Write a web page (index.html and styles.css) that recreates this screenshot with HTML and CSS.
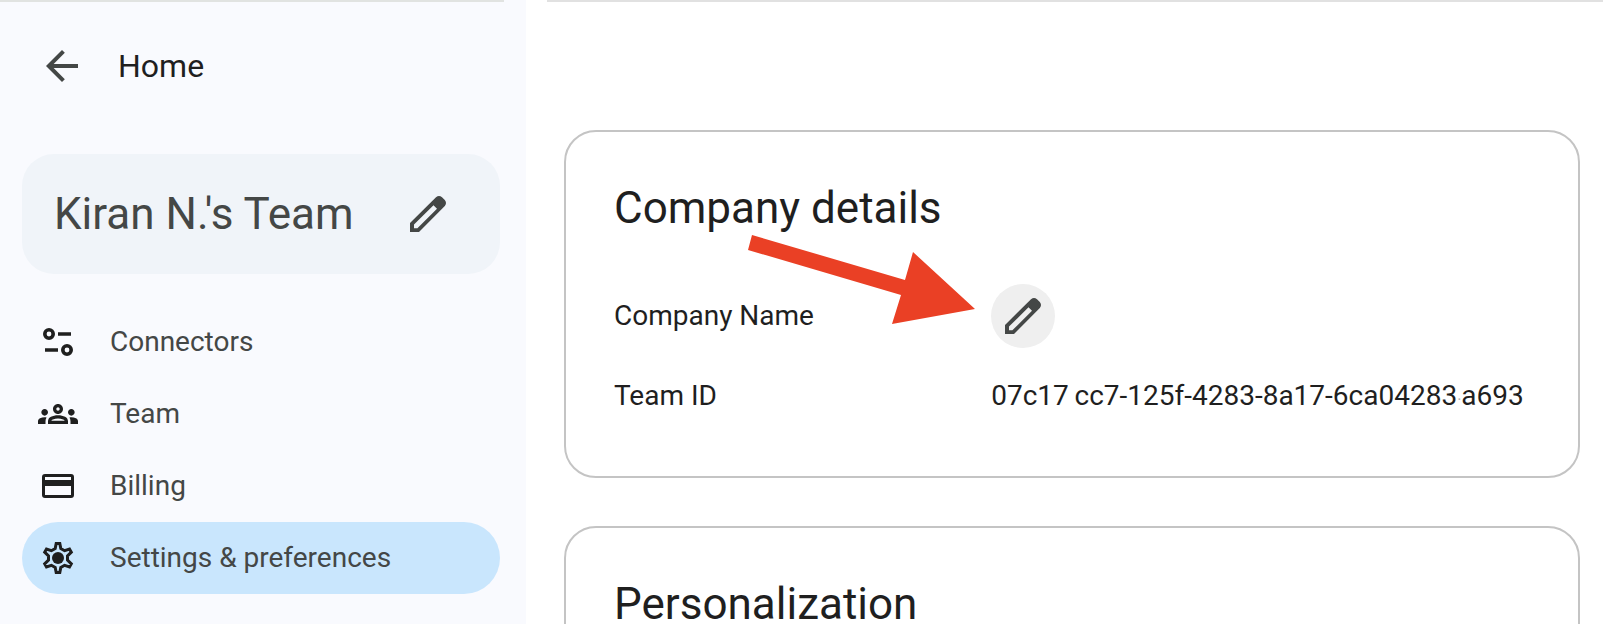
FILE: index.html
```html
<!DOCTYPE html>
<html lang="en">
  <head>
    <meta charset="UTF-8" />
    <meta name="viewport" content="width=device-width, initial-scale=1" />
    <title>Settings &amp; preferences</title>
    <link rel="stylesheet" href="styles.css">
  </head>
  <body>
    <div class="layout">
      <!-- Sidebar -->
      <aside class="sidebar">
        <a class="home-link" href="#">
          <svg class="icon-lg" viewBox="0 0 24 24" aria-hidden="true">
            <path d="M20 11H7.83l5.59-5.59L12 4l-8 8 8 8 1.41-1.41L7.83 13H20v-2z" />
          </svg>
          <span>Home</span>
        </a>

        <div class="team-card">
          <span class="team-name">Kiran N.'s Team</span>
          <button class="icon-btn" type="button" aria-label="Edit team name">
            <svg class="pencil" viewBox="0 0 36 36" aria-hidden="true">
              <path fill-rule="evenodd" d="M0 36V27L26 1.2Q29-1.2 32 1.2L34.8 4Q37.2 7 34.8 10L9 36ZM4 32.2H7.4L27 12.8 23.5 9.3 4 28.6Z" />
            </svg>
          </button>
        </div>

        <nav class="menu">
          <a class="menu-item" href="#">
            <svg class="icon" viewBox="0 0 40 40" aria-hidden="true">
              <g fill="none" stroke="currentColor">
                <circle cx="11" cy="12" r="4.2" stroke-width="3.6" />
                <circle cx="29" cy="28" r="4.2" stroke-width="3.6" />
                <path d="M20 12h13M7 28h13" stroke-width="3.4" />
              </g>
            </svg>
            <span>Connectors</span>
          </a>
          <a class="menu-item" href="#">
            <svg class="icon" viewBox="0 0 24 24" aria-hidden="true">
              <path d="M4 13c1.1 0 2-.9 2-2s-.9-2-2-2-2 .9-2 2 .9 2 2 2zm1.13 1.1C4.76 14.04 4.39 14 4 14c-.99 0-1.93.21-2.78.58C.48 14.9 0 15.62 0 16.43V18h4.5v-1.61c0-.83.23-1.61.63-2.29zM20 13c1.1 0 2-.9 2-2s-.9-2-2-2-2 .9-2 2 .9 2 2 2zm4 3.43c0-.81-.48-1.53-1.22-1.85C21.93 14.21 20.99 14 20 14c-.39 0-.76.04-1.13.1.4.68.63 1.46.63 2.29V18H24v-1.57zM16.24 13.65c-1.17-.52-2.61-.9-4.24-.9s-3.07.39-4.24.9C6.68 14.13 6 15.21 6 16.39V18h12v-1.61c0-1.18-.68-2.26-1.76-2.74zM8.07 16c.09-.23.13-.39.91-.69.97-.38 1.99-.56 3.02-.56s2.05.18 3.02.56c.77.3.81.46.91.69H8.07zM12 8c.55 0 1 .45 1 1s-.45 1-1 1-1-.45-1-1 .45-1 1-1m0-2c-1.66 0-3 1.34-3 3s1.34 3 3 3 3-1.34 3-3-1.34-3-3-3z" />
            </svg>
            <span>Team</span>
          </a>
          <a class="menu-item" href="#">
            <svg class="icon" viewBox="0 0 40 40" aria-hidden="true">
              <path fill-rule="evenodd" d="M7 8H33a3 3 0 0 1 3 3V29a3 3 0 0 1-3 3H7a3 3 0 0 1-3-3V11a3 3 0 0 1 3-3ZM7 11V14H33V11ZM7 20V29H33V20Z" />
            </svg>
            <span>Billing</span>
          </a>
          <a class="menu-item active" href="#" aria-current="page">
            <svg class="icon" viewBox="0 0 40 40" aria-hidden="true">
              <path fill="none" stroke="currentColor" stroke-width="3" d="M18.2 5.5H21.8L22.8 10.5 26.6 12.7 31.5 11 33.3 14.2 29.5 17.8V22.2L33.3 25.8 31.5 29 26.6 27.3 22.8 29.5 21.8 34.5H18.2L17.2 29.5 13.4 27.3 8.5 29 6.7 25.8 10.5 22.2V17.8L6.7 14.2 8.5 11 13.4 12.7 17.2 10.5Z" />
              <circle cx="20" cy="20" r="6" />
            </svg>
            <span>Settings &amp; preferences</span>
          </a>
        </nav>
      </aside>

      <!-- Content -->
      <main class="content">
        <section class="card">
          <h2>Company details</h2>
          <dl class="details">
            <dt>Company Name</dt>
            <dd class="name-value">
              <button class="icon-btn filled" type="button" aria-label="Edit company name">
                <svg class="pencil" viewBox="0 0 36 36" aria-hidden="true">
                  <path fill-rule="evenodd" d="M0 36V27L26 1.2Q29-1.2 32 1.2L34.8 4Q37.2 7 34.8 10L9 36ZM4 32.2H7.4L27 12.8 23.5 9.3 4 28.6Z" />
                </svg>
              </button>
              <svg class="pointer-arrow" viewBox="0 0 228 89" aria-hidden="true">
                <path d="M5 0L158 45L166 17L228 74L145 89L154 60L1 15Z" />
              </svg>
            </dd>
            <dt>Team ID</dt>
            <dd>07c17&thinsp;cc7-125f-4283-8a17-6ca04283<span class="faint">·</span>a693</dd>
          </dl>
        </section>

        <section class="card">
          <h2>Personalization</h2>
        </section>
      </main>
    </div>
  </body>
</html>
```
FILE: styles.css
```css
* {
  box-sizing: border-box;
}

body {
  margin: 0;
  font-family: Roboto, "Liberation Sans", sans-serif;
  font-size: 28px;
  line-height: 40px;
  color: #1f1f1f;
  background: #fff;
}

a {
  color: inherit;
  text-decoration: none;
}

svg {
  display: block;
  flex: none;
  fill: currentColor;
}

.layout {
  display: flex;
  height: 100vh;
  overflow: hidden;
}

/* Sidebar */
.sidebar {
  flex: none;
  width: 526px;
  padding-right: 26px;
  padding-left: 22px;
  background: #f9fafe;
}

.sidebar::before {
  content: "";
  display: block;
  height: 2px;
  margin-right: -4px;
  margin-left: -22px;
  background: #e1e3e1;
}

.home-link {
  display: flex;
  align-items: center;
  gap: 32px;
  height: 128px;
  padding-left: 16px;
  font-size: 32px;
}

.icon-lg {
  width: 48px;
  height: 48px;
  color: #444746;
}

.team-card {
  display: flex;
  align-items: center;
  justify-content: space-between;
  height: 120px;
  margin-top: 24px;
  padding: 0 40px 0 32px;
  border-radius: 32px;
  background: #f0f4f9;
  color: #444746;
}

.team-name {
  font-size: 44px;
  line-height: 56px;
}

.menu {
  margin-top: 32px;
}

.menu-item {
  display: flex;
  align-items: center;
  gap: 32px;
  height: 72px;
  padding: 0 16px;
  border-radius: 36px;
}

.menu-item span {
  color: #444746;
}

.menu-item.active {
  background: #c9e6fd;
}

.icon {
  width: 40px;
  height: 40px;
}

/* Buttons */
.icon-btn {
  display: flex;
  align-items: center;
  justify-content: center;
  width: 64px;
  height: 64px;
  padding: 0;
  border: none;
  border-radius: 50%;
  background: transparent;
  color: #444746;
  cursor: pointer;
}

.icon-btn.filled {
  background: #efefef;
}

.pencil {
  width: 36px;
  height: 36px;
}

/* Content */
.content {
  flex: 1;
  padding: 0 23px 0 38px;
}

.content::before {
  content: "";
  display: block;
  height: 2px;
  margin: 0 -23px 128px -17px;
  background: #e1e1e1;
}

.card {
  margin-bottom: 48px;
  padding: 48px 48px 60px;
  border: 2px solid #c4c4c4;
  border-radius: 32px;
}

.card h2 {
  margin: 0;
  font-size: 44px;
  font-weight: 400;
  line-height: 56px;
}

.details {
  display: grid;
  grid-template-columns: 7fr 10fr;
  row-gap: 28px;
  align-items: center;
  margin: 48px 0 0;
}

.details dd {
  margin: 0;
  white-space: nowrap;
}

.name-value {
  position: relative;
}

/* Red arrow lying over the card, pointing at the edit button */
.pointer-arrow {
  position: absolute;
  top: -49px;
  left: -244px;
  width: 228px;
  height: 89px;
  color: #ea4025;
}

.faint {
  font-size: 16px;
  line-height: 1;
  color: #b0b0b0;
}
```
